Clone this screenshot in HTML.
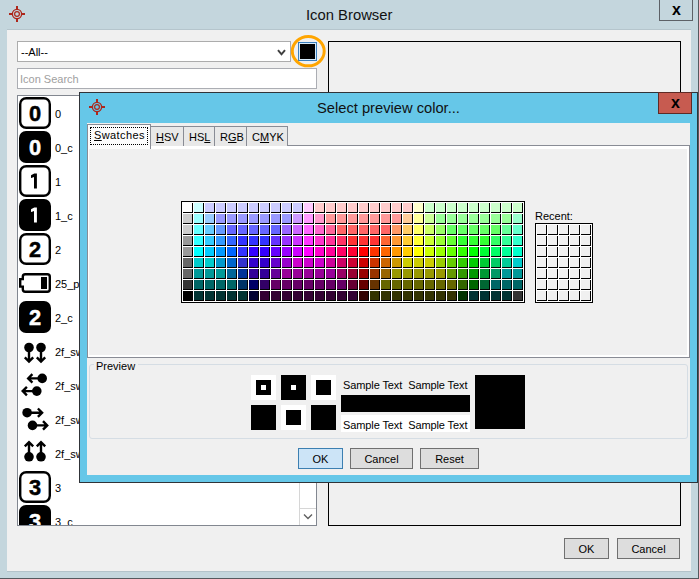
<!DOCTYPE html>
<html><head><meta charset="utf-8">
<style>
*{box-sizing:border-box;margin:0;padding:0}
html,body{width:699px;height:579px;overflow:hidden}
body{position:relative;background:#c4d6dd;font-family:"Liberation Sans",sans-serif;font-size:11px;color:#000}
.a{position:absolute}
.t{position:absolute;white-space:nowrap;line-height:1}
.btn{position:absolute;background:#dddddd;border:1px solid #707070;text-align:center;font-size:11px}
</style></head><body>
<!-- main window frame -->
<div class="a" style="left:698px;top:0;width:1px;height:579px;background:#55595e"></div>
<div class="a" style="left:0;top:578px;width:699px;height:1px;background:#55595e"></div>
<svg class="a" style="left:8px;top:5px" width="18" height="18" viewBox="0 0 18 18">
 <g fill="none" stroke="#ad271b">
  <circle cx="9" cy="9" r="4.6" stroke-width="1.3"/>
  <circle cx="9" cy="9" r="2.4" stroke-width="1.2"/>
 </g>
 <g fill="#ad271b"><rect x="8" y="1" width="2" height="3.5"/><rect x="8" y="13.5" width="2" height="3.5"/><rect x="1" y="8" width="3.5" height="2"/><rect x="13.5" y="8" width="3.5" height="2"/></g>
</svg>
<div class="t" style="left:306px;top:7px;font-size:15.5px;color:#111;transform:scaleX(0.955);transform-origin:0 0">Icon Browser</div>
<div class="a" style="left:659px;top:-1px;width:34px;height:22px;border:1px solid #5d6166"></div>
<div class="t" style="left:672px;top:2px;font-size:16px;font-weight:bold">x</div>

<!-- main content -->
<div class="a" style="left:7px;top:29px;width:684px;height:543px;background:#f0f0f0;border-top:1px solid #b5c5cc;border-bottom:1px solid #b3c3ca"></div>
<!-- combo -->
<div class="a" style="left:17px;top:41px;width:274px;height:21px;background:#fff;border:1px solid #acacac"></div>
<div class="t" style="left:21px;top:47px">--All--</div>
<svg class="a" style="left:277px;top:49px" width="9" height="8" viewBox="0 0 9 8"><path d="M1 1.2L4.5 5.3L8 1.2" fill="none" stroke="#404040" stroke-width="2"/></svg>
<!-- color button -->
<div class="a" style="left:298px;top:42px;width:19px;height:19px;border:1px solid #3a7ebd;background:#d5ebfb;padding:1px"><div style="width:15px;height:15px;background:#000"></div></div>
<svg class="a" style="left:288px;top:31px" width="40" height="40" viewBox="0 0 40 40"><ellipse cx="20.25" cy="20.2" rx="15.95" ry="14.6" fill="none" stroke="#ffa500" stroke-width="3"/></svg>
<!-- search -->
<div class="a" style="left:17px;top:68px;width:300px;height:21px;background:#fff;border:1px solid #abadb3"></div>
<div class="t" style="left:20px;top:74px;color:#a0a0a0">Icon Search</div>
<!-- list -->
<div class="a" style="left:17px;top:95px;width:300px;height:431px;background:#fff;border:1px solid #828790;overflow:hidden">
<div class="a" style="left:1px;top:1px;width:32px;height:32px"><svg width="32" height="32" viewBox="0 0 32 32"><rect x="1.2" y="1.2" width="29.6" height="29.6" rx="6" fill="#fff" stroke="#000" stroke-width="2.4"/><text x="16" y="23.7" text-anchor="middle" font-family="Liberation Sans" font-weight="bold" font-size="21.8" fill="#000" stroke="#000" stroke-width="0.5">0</text></svg></div>
<div class="t" style="left:37px;top:13px">0</div>
<div class="a" style="left:1px;top:35px;width:32px;height:32px"><svg width="32" height="32" viewBox="0 0 32 32"><rect x="0" y="0" width="32" height="32" rx="7" fill="#000"/><text x="16" y="23.7" text-anchor="middle" font-family="Liberation Sans" font-weight="bold" font-size="21.8" fill="#fff" stroke="#fff" stroke-width="0.5">0</text></svg></div>
<div class="t" style="left:37px;top:47px">0_c</div>
<div class="a" style="left:1px;top:69px;width:32px;height:32px"><svg width="32" height="32" viewBox="0 0 32 32"><rect x="1.2" y="1.2" width="29.6" height="29.6" rx="6" fill="#fff" stroke="#000" stroke-width="2.4"/><path d="M15.3 8.6H17.9V23.5H15.0V12.1L12.4 12.9Q12 13 12 12.6V10.6Q12 10.2 12.4 10L15.3 8.6Z" fill="#000"/></svg></div>
<div class="t" style="left:37px;top:81px">1</div>
<div class="a" style="left:1px;top:103px;width:32px;height:32px"><svg width="32" height="32" viewBox="0 0 32 32"><rect x="0" y="0" width="32" height="32" rx="7" fill="#000"/><path d="M15.3 8.6H17.9V23.5H15.0V12.1L12.4 12.9Q12 13 12 12.6V10.6Q12 10.2 12.4 10L15.3 8.6Z" fill="#fff"/></svg></div>
<div class="t" style="left:37px;top:115px">1_c</div>
<div class="a" style="left:1px;top:137px;width:32px;height:32px"><svg width="32" height="32" viewBox="0 0 32 32"><rect x="1.2" y="1.2" width="29.6" height="29.6" rx="6" fill="#fff" stroke="#000" stroke-width="2.4"/><text x="16" y="23.7" text-anchor="middle" font-family="Liberation Sans" font-weight="bold" font-size="21.8" fill="#000" stroke="#000" stroke-width="0.5">2</text></svg></div>
<div class="t" style="left:37px;top:149px">2</div>
<div class="a" style="left:1px;top:171px;width:32px;height:32px"><svg width="32" height="32" viewBox="0 0 32 32"><path d="M3.8 12.1V9.7Q3.8 7.2 6.3 7.2H28.3Q30.8 7.2 30.8 9.7V22.3Q30.8 24.8 28.3 24.8H6.3Q3.8 24.8 3.8 22.3V19.6H1.2V12.1Z" fill="none" stroke="#000" stroke-width="2.4"/><rect x="22" y="10" width="6" height="12" fill="#000"/></svg></div>
<div class="t" style="left:37px;top:183px">25_percent</div>
<div class="a" style="left:1px;top:205px;width:32px;height:32px"><svg width="32" height="32" viewBox="0 0 32 32"><rect x="0" y="0" width="32" height="32" rx="7" fill="#000"/><text x="16" y="23.7" text-anchor="middle" font-family="Liberation Sans" font-weight="bold" font-size="21.8" fill="#fff" stroke="#fff" stroke-width="0.5">2</text></svg></div>
<div class="t" style="left:37px;top:217px">2_c</div>
<div class="a" style="left:1px;top:239px;width:32px;height:32px"><svg width="32" height="32" viewBox="0 0 32 32"><circle cx="10" cy="12.5" r="4.8"/><circle cx="22" cy="12.5" r="4.8"/><path d="M10 13V26.5M5.8 22.4L10 26.6L14.2 22.4M22 13V26.5M17.8 22.4L22 26.6L26.2 22.4" fill="none" stroke="#000" stroke-width="2.4"/></svg></div>
<div class="t" style="left:37px;top:251px">2f_swap_vert</div>
<div class="a" style="left:1px;top:273px;width:32px;height:32px"><svg width="32" height="32" viewBox="0 0 32 32"><circle cx="23.2" cy="9.4" r="4.8"/><circle cx="17.8" cy="22.1" r="4.8"/><path d="M23 9.4H9.3M13.4 5.2L9.2 9.4L13.4 13.6M17.6 22.1H3.8M7.9 17.9L3.7 22.1L7.9 26.3" fill="none" stroke="#000" stroke-width="2.4"/></svg></div>
<div class="t" style="left:37px;top:285px">2f_swap_horiz</div>
<div class="a" style="left:1px;top:307px;width:32px;height:32px"><svg width="32" height="32" viewBox="0 0 32 32"><circle cx="8.1" cy="9.7" r="4.8"/><circle cx="13.5" cy="22.4" r="4.8"/><path d="M8.3 9.7H23M18.9 5.5L23.1 9.7L18.9 13.9M13.7 22.4H28.1M24 18.2L28.2 22.4L24 26.6" fill="none" stroke="#000" stroke-width="2.4"/></svg></div>
<div class="t" style="left:37px;top:319px">2f_swap_horiz</div>
<div class="a" style="left:1px;top:341px;width:32px;height:32px"><svg width="32" height="32" viewBox="0 0 32 32"><circle cx="10" cy="19.8" r="4.8"/><circle cx="22" cy="19.8" r="4.8"/><path d="M10 19.5V5.3M5.8 9.4L10 5.2L14.2 9.4M22 19.5V5.3M17.8 9.4L22 5.2L26.2 9.4" fill="none" stroke="#000" stroke-width="2.4"/></svg></div>
<div class="t" style="left:37px;top:353px">2f_swap_vert</div>
<div class="a" style="left:1px;top:375px;width:32px;height:32px"><svg width="32" height="32" viewBox="0 0 32 32"><rect x="1.2" y="1.2" width="29.6" height="29.6" rx="6" fill="#fff" stroke="#000" stroke-width="2.4"/><text x="16" y="23.7" text-anchor="middle" font-family="Liberation Sans" font-weight="bold" font-size="21.8" fill="#000" stroke="#000" stroke-width="0.5">3</text></svg></div>
<div class="t" style="left:37px;top:387px">3</div>
<div class="a" style="left:1px;top:409px;width:32px;height:32px"><svg width="32" height="32" viewBox="0 0 32 32"><rect x="0" y="0" width="32" height="32" rx="7" fill="#000"/><text x="16" y="23.7" text-anchor="middle" font-family="Liberation Sans" font-weight="bold" font-size="21.8" fill="#fff" stroke="#fff" stroke-width="0.5">3</text></svg></div>
<div class="t" style="left:37px;top:421px">3_c</div>
<div class="a" style="left:281px;top:0;width:17px;height:429px;background:#fff;border-left:1px solid #d6d6d6"></div>
<div class="a" style="left:281px;top:412px;width:17px;height:17px;border-left:1px solid #d6d6d6;border-top:1px solid #d6d6d6;background:#fff"></div>
<svg class="a" style="left:285px;top:417px" width="10" height="7" viewBox="0 0 10 7"><path d="M1 1.5L5 5.5L9 1.5" fill="none" stroke="#606060" stroke-width="1.4"/></svg>
</div>
<!-- right panel -->
<div class="a" style="left:328px;top:41px;width:353px;height:485px;border:1px solid #000"></div>
<div class="btn" style="left:564px;top:538px;width:45px;height:21px;line-height:20px">OK</div>
<div class="btn" style="left:617px;top:538px;width:63px;height:21px;line-height:20px">Cancel</div>

<!-- dialog -->
<div class="a" style="left:79px;top:92px;width:619px;height:391px;background:#66c7e8;border:1px solid #303338"></div>
<svg class="a" style="left:88px;top:98px" width="18" height="18" viewBox="0 0 18 18">
 <g fill="none" stroke="#ad271b">
  <circle cx="9" cy="9" r="4.6" stroke-width="1.3"/>
  <circle cx="9" cy="9" r="2.4" stroke-width="1.2"/>
 </g>
 <g fill="#ad271b"><rect x="8" y="1" width="2" height="3.5"/><rect x="8" y="13.5" width="2" height="3.5"/><rect x="1" y="8" width="3.5" height="2"/><rect x="13.5" y="8" width="3.5" height="2"/></g>
</svg>
<div class="t" style="left:317px;top:100px;font-size:15.5px;color:#111;transform:scaleX(0.948);transform-origin:0 0">Select preview color...</div>
<div class="a" style="left:658px;top:92px;width:34px;height:22px;background:#c75b50;border:1px solid #5e2a25"></div>
<div class="t" style="left:671px;top:95px;font-size:16px;font-weight:bold">x</div>
<div class="a" style="left:87px;top:123px;width:603px;height:352px;background:#f0f0f0"></div>

<!-- tab content -->
<div class="a" style="left:87px;top:145px;width:603px;height:213px;background:#f0f0f0;border:1px solid #898c95;box-shadow:inset 1px 0 0 #fff, inset 0 3px 0 #fff, inset -2px 0 0 #fff, inset 0 -2px 0 #fff"></div>
<!-- tabs -->
<div class="a" style="left:150px;top:126px;width:34px;height:20px;background:#e8e8e8;border:1px solid #898c95;border-bottom:none"></div>
<div class="a" style="left:183px;top:126px;width:32px;height:20px;background:#e8e8e8;border:1px solid #898c95;border-bottom:none"></div>
<div class="a" style="left:214px;top:126px;width:33px;height:20px;background:#e8e8e8;border:1px solid #898c95;border-bottom:none"></div>
<div class="a" style="left:246px;top:126px;width:42px;height:20px;background:#e8e8e8;border:1px solid #898c95;border-bottom:none"></div>
<div class="a" style="left:87px;top:124px;width:64px;height:25px;background:#fcfcfc;border:1px solid #898c95;border-bottom:none"></div>
<div class="a" style="left:90px;top:127px;width:58px;height:18px;border:1px dotted #000"></div>
<div class="t" style="left:94px;top:130px;font-size:11px;letter-spacing:0.4px"><u>S</u>watches</div>
<div class="t" style="left:156px;top:132px"><u>H</u>SV</div>
<div class="t" style="left:189px;top:132px">HS<u>L</u></div>
<div class="t" style="left:220px;top:132px">R<u>G</u>B</div>
<div class="t" style="left:252px;top:132px">C<u>M</u>YK</div>

<svg style="position:absolute;left:181px;top:201px" width="344" height="102" shape-rendering="crispEdges"><rect x="0" y="0" width="344" height="102" fill="#fff"/><rect x="0.5" y="0.5" width="343" height="101" fill="none" stroke="#000"/><rect x="2" y="2" width="10" height="10" fill="#ffffff"/><rect x="13" y="2" width="10" height="10" fill="#ccffff"/><rect x="24" y="2" width="10" height="10" fill="#ccccff"/><rect x="35" y="2" width="10" height="10" fill="#ccccff"/><rect x="46" y="2" width="10" height="10" fill="#ccccff"/><rect x="57" y="2" width="10" height="10" fill="#ccccff"/><rect x="68" y="2" width="10" height="10" fill="#ccccff"/><rect x="79" y="2" width="10" height="10" fill="#ccccff"/><rect x="90" y="2" width="10" height="10" fill="#ccccff"/><rect x="101" y="2" width="10" height="10" fill="#ccccff"/><rect x="112" y="2" width="10" height="10" fill="#ccccff"/><rect x="123" y="2" width="10" height="10" fill="#ffccff"/><rect x="134" y="2" width="10" height="10" fill="#ffcccc"/><rect x="145" y="2" width="10" height="10" fill="#ffcccc"/><rect x="156" y="2" width="10" height="10" fill="#ffcccc"/><rect x="167" y="2" width="10" height="10" fill="#ffcccc"/><rect x="178" y="2" width="10" height="10" fill="#ffcccc"/><rect x="189" y="2" width="10" height="10" fill="#ffcccc"/><rect x="200" y="2" width="10" height="10" fill="#ffcccc"/><rect x="211" y="2" width="10" height="10" fill="#ffcccc"/><rect x="222" y="2" width="10" height="10" fill="#ffcccc"/><rect x="233" y="2" width="10" height="10" fill="#ffffcc"/><rect x="244" y="2" width="10" height="10" fill="#ccffcc"/><rect x="255" y="2" width="10" height="10" fill="#ccffcc"/><rect x="266" y="2" width="10" height="10" fill="#ccffcc"/><rect x="277" y="2" width="10" height="10" fill="#ccffcc"/><rect x="288" y="2" width="10" height="10" fill="#ccffcc"/><rect x="299" y="2" width="10" height="10" fill="#ccffcc"/><rect x="310" y="2" width="10" height="10" fill="#ccffcc"/><rect x="321" y="2" width="10" height="10" fill="#ccffcc"/><rect x="332" y="2" width="10" height="10" fill="#ccffcc"/><rect x="2" y="13" width="10" height="10" fill="#cccccc"/><rect x="13" y="13" width="10" height="10" fill="#99ffff"/><rect x="24" y="13" width="10" height="10" fill="#99ccff"/><rect x="35" y="13" width="10" height="10" fill="#9999ff"/><rect x="46" y="13" width="10" height="10" fill="#9999ff"/><rect x="57" y="13" width="10" height="10" fill="#9999ff"/><rect x="68" y="13" width="10" height="10" fill="#9999ff"/><rect x="79" y="13" width="10" height="10" fill="#9999ff"/><rect x="90" y="13" width="10" height="10" fill="#9999ff"/><rect x="101" y="13" width="10" height="10" fill="#9999ff"/><rect x="112" y="13" width="10" height="10" fill="#cc99ff"/><rect x="123" y="13" width="10" height="10" fill="#ff99ff"/><rect x="134" y="13" width="10" height="10" fill="#ff99cc"/><rect x="145" y="13" width="10" height="10" fill="#ff9999"/><rect x="156" y="13" width="10" height="10" fill="#ff9999"/><rect x="167" y="13" width="10" height="10" fill="#ff9999"/><rect x="178" y="13" width="10" height="10" fill="#ff9999"/><rect x="189" y="13" width="10" height="10" fill="#ff9999"/><rect x="200" y="13" width="10" height="10" fill="#ff9999"/><rect x="211" y="13" width="10" height="10" fill="#ff9999"/><rect x="222" y="13" width="10" height="10" fill="#ffcc99"/><rect x="233" y="13" width="10" height="10" fill="#ffff99"/><rect x="244" y="13" width="10" height="10" fill="#ccff99"/><rect x="255" y="13" width="10" height="10" fill="#99ff99"/><rect x="266" y="13" width="10" height="10" fill="#99ff99"/><rect x="277" y="13" width="10" height="10" fill="#99ff99"/><rect x="288" y="13" width="10" height="10" fill="#99ff99"/><rect x="299" y="13" width="10" height="10" fill="#99ff99"/><rect x="310" y="13" width="10" height="10" fill="#99ff99"/><rect x="321" y="13" width="10" height="10" fill="#99ff99"/><rect x="332" y="13" width="10" height="10" fill="#99ffcc"/><rect x="2" y="24" width="10" height="10" fill="#cccccc"/><rect x="13" y="24" width="10" height="10" fill="#66ffff"/><rect x="24" y="24" width="10" height="10" fill="#66ccff"/><rect x="35" y="24" width="10" height="10" fill="#6699ff"/><rect x="46" y="24" width="10" height="10" fill="#6666ff"/><rect x="57" y="24" width="10" height="10" fill="#6666ff"/><rect x="68" y="24" width="10" height="10" fill="#6666ff"/><rect x="79" y="24" width="10" height="10" fill="#6666ff"/><rect x="90" y="24" width="10" height="10" fill="#6666ff"/><rect x="101" y="24" width="10" height="10" fill="#9966ff"/><rect x="112" y="24" width="10" height="10" fill="#cc66ff"/><rect x="123" y="24" width="10" height="10" fill="#ff66ff"/><rect x="134" y="24" width="10" height="10" fill="#ff66cc"/><rect x="145" y="24" width="10" height="10" fill="#ff6699"/><rect x="156" y="24" width="10" height="10" fill="#ff6666"/><rect x="167" y="24" width="10" height="10" fill="#ff6666"/><rect x="178" y="24" width="10" height="10" fill="#ff6666"/><rect x="189" y="24" width="10" height="10" fill="#ff6666"/><rect x="200" y="24" width="10" height="10" fill="#ff6666"/><rect x="211" y="24" width="10" height="10" fill="#ff9966"/><rect x="222" y="24" width="10" height="10" fill="#ffcc66"/><rect x="233" y="24" width="10" height="10" fill="#ffff66"/><rect x="244" y="24" width="10" height="10" fill="#ccff66"/><rect x="255" y="24" width="10" height="10" fill="#99ff66"/><rect x="266" y="24" width="10" height="10" fill="#66ff66"/><rect x="277" y="24" width="10" height="10" fill="#66ff66"/><rect x="288" y="24" width="10" height="10" fill="#66ff66"/><rect x="299" y="24" width="10" height="10" fill="#66ff66"/><rect x="310" y="24" width="10" height="10" fill="#66ff66"/><rect x="321" y="24" width="10" height="10" fill="#66ff99"/><rect x="332" y="24" width="10" height="10" fill="#66ffcc"/><rect x="2" y="35" width="10" height="10" fill="#999999"/><rect x="13" y="35" width="10" height="10" fill="#33ffff"/><rect x="24" y="35" width="10" height="10" fill="#33ccff"/><rect x="35" y="35" width="10" height="10" fill="#3399ff"/><rect x="46" y="35" width="10" height="10" fill="#3366ff"/><rect x="57" y="35" width="10" height="10" fill="#3333ff"/><rect x="68" y="35" width="10" height="10" fill="#3333ff"/><rect x="79" y="35" width="10" height="10" fill="#3333ff"/><rect x="90" y="35" width="10" height="10" fill="#6633ff"/><rect x="101" y="35" width="10" height="10" fill="#9933ff"/><rect x="112" y="35" width="10" height="10" fill="#cc33ff"/><rect x="123" y="35" width="10" height="10" fill="#ff33ff"/><rect x="134" y="35" width="10" height="10" fill="#ff33cc"/><rect x="145" y="35" width="10" height="10" fill="#ff3399"/><rect x="156" y="35" width="10" height="10" fill="#ff3366"/><rect x="167" y="35" width="10" height="10" fill="#ff3333"/><rect x="178" y="35" width="10" height="10" fill="#ff3333"/><rect x="189" y="35" width="10" height="10" fill="#ff3333"/><rect x="200" y="35" width="10" height="10" fill="#ff6633"/><rect x="211" y="35" width="10" height="10" fill="#ff9933"/><rect x="222" y="35" width="10" height="10" fill="#ffcc33"/><rect x="233" y="35" width="10" height="10" fill="#ffff33"/><rect x="244" y="35" width="10" height="10" fill="#ccff33"/><rect x="255" y="35" width="10" height="10" fill="#99ff33"/><rect x="266" y="35" width="10" height="10" fill="#66ff33"/><rect x="277" y="35" width="10" height="10" fill="#33ff33"/><rect x="288" y="35" width="10" height="10" fill="#33ff33"/><rect x="299" y="35" width="10" height="10" fill="#33ff33"/><rect x="310" y="35" width="10" height="10" fill="#33ff66"/><rect x="321" y="35" width="10" height="10" fill="#33ff99"/><rect x="332" y="35" width="10" height="10" fill="#33ffcc"/><rect x="2" y="46" width="10" height="10" fill="#999999"/><rect x="13" y="46" width="10" height="10" fill="#00ffff"/><rect x="24" y="46" width="10" height="10" fill="#00ccff"/><rect x="35" y="46" width="10" height="10" fill="#0099ff"/><rect x="46" y="46" width="10" height="10" fill="#0066ff"/><rect x="57" y="46" width="10" height="10" fill="#3333ff"/><rect x="68" y="46" width="10" height="10" fill="#3300ff"/><rect x="79" y="46" width="10" height="10" fill="#3300ff"/><rect x="90" y="46" width="10" height="10" fill="#6600ff"/><rect x="101" y="46" width="10" height="10" fill="#9900ff"/><rect x="112" y="46" width="10" height="10" fill="#cc00ff"/><rect x="123" y="46" width="10" height="10" fill="#ff00ff"/><rect x="134" y="46" width="10" height="10" fill="#ff00cc"/><rect x="145" y="46" width="10" height="10" fill="#ff0099"/><rect x="156" y="46" width="10" height="10" fill="#ff0066"/><rect x="167" y="46" width="10" height="10" fill="#ff0033"/><rect x="178" y="46" width="10" height="10" fill="#ff0000"/><rect x="189" y="46" width="10" height="10" fill="#ff3300"/><rect x="200" y="46" width="10" height="10" fill="#ff6600"/><rect x="211" y="46" width="10" height="10" fill="#ff9900"/><rect x="222" y="46" width="10" height="10" fill="#ffcc00"/><rect x="233" y="46" width="10" height="10" fill="#ffff00"/><rect x="244" y="46" width="10" height="10" fill="#ccff00"/><rect x="255" y="46" width="10" height="10" fill="#99ff00"/><rect x="266" y="46" width="10" height="10" fill="#66ff00"/><rect x="277" y="46" width="10" height="10" fill="#33ff00"/><rect x="288" y="46" width="10" height="10" fill="#00ff00"/><rect x="299" y="46" width="10" height="10" fill="#00ff33"/><rect x="310" y="46" width="10" height="10" fill="#00ff66"/><rect x="321" y="46" width="10" height="10" fill="#00ff99"/><rect x="332" y="46" width="10" height="10" fill="#00ffcc"/><rect x="2" y="57" width="10" height="10" fill="#666666"/><rect x="13" y="57" width="10" height="10" fill="#00cccc"/><rect x="24" y="57" width="10" height="10" fill="#00cccc"/><rect x="35" y="57" width="10" height="10" fill="#0099cc"/><rect x="46" y="57" width="10" height="10" fill="#0066cc"/><rect x="57" y="57" width="10" height="10" fill="#3333cc"/><rect x="68" y="57" width="10" height="10" fill="#3300cc"/><rect x="79" y="57" width="10" height="10" fill="#3300cc"/><rect x="90" y="57" width="10" height="10" fill="#6600cc"/><rect x="101" y="57" width="10" height="10" fill="#9900cc"/><rect x="112" y="57" width="10" height="10" fill="#cc00cc"/><rect x="123" y="57" width="10" height="10" fill="#cc00cc"/><rect x="134" y="57" width="10" height="10" fill="#cc00cc"/><rect x="145" y="57" width="10" height="10" fill="#cc0099"/><rect x="156" y="57" width="10" height="10" fill="#cc0066"/><rect x="167" y="57" width="10" height="10" fill="#cc0033"/><rect x="178" y="57" width="10" height="10" fill="#cc0000"/><rect x="189" y="57" width="10" height="10" fill="#cc3300"/><rect x="200" y="57" width="10" height="10" fill="#cc6600"/><rect x="211" y="57" width="10" height="10" fill="#cc9900"/><rect x="222" y="57" width="10" height="10" fill="#cccc00"/><rect x="233" y="57" width="10" height="10" fill="#cccc00"/><rect x="244" y="57" width="10" height="10" fill="#cccc00"/><rect x="255" y="57" width="10" height="10" fill="#99cc00"/><rect x="266" y="57" width="10" height="10" fill="#66cc00"/><rect x="277" y="57" width="10" height="10" fill="#33cc00"/><rect x="288" y="57" width="10" height="10" fill="#00cc00"/><rect x="299" y="57" width="10" height="10" fill="#00cc33"/><rect x="310" y="57" width="10" height="10" fill="#00cc66"/><rect x="321" y="57" width="10" height="10" fill="#00cc99"/><rect x="332" y="57" width="10" height="10" fill="#00cccc"/><rect x="2" y="68" width="10" height="10" fill="#666666"/><rect x="13" y="68" width="10" height="10" fill="#009999"/><rect x="24" y="68" width="10" height="10" fill="#009999"/><rect x="35" y="68" width="10" height="10" fill="#009999"/><rect x="46" y="68" width="10" height="10" fill="#006699"/><rect x="57" y="68" width="10" height="10" fill="#003399"/><rect x="68" y="68" width="10" height="10" fill="#330099"/><rect x="79" y="68" width="10" height="10" fill="#330099"/><rect x="90" y="68" width="10" height="10" fill="#660099"/><rect x="101" y="68" width="10" height="10" fill="#990099"/><rect x="112" y="68" width="10" height="10" fill="#990099"/><rect x="123" y="68" width="10" height="10" fill="#990099"/><rect x="134" y="68" width="10" height="10" fill="#990099"/><rect x="145" y="68" width="10" height="10" fill="#990099"/><rect x="156" y="68" width="10" height="10" fill="#990066"/><rect x="167" y="68" width="10" height="10" fill="#990033"/><rect x="178" y="68" width="10" height="10" fill="#990000"/><rect x="189" y="68" width="10" height="10" fill="#993300"/><rect x="200" y="68" width="10" height="10" fill="#996600"/><rect x="211" y="68" width="10" height="10" fill="#999900"/><rect x="222" y="68" width="10" height="10" fill="#999900"/><rect x="233" y="68" width="10" height="10" fill="#999900"/><rect x="244" y="68" width="10" height="10" fill="#999900"/><rect x="255" y="68" width="10" height="10" fill="#999900"/><rect x="266" y="68" width="10" height="10" fill="#669900"/><rect x="277" y="68" width="10" height="10" fill="#339900"/><rect x="288" y="68" width="10" height="10" fill="#009900"/><rect x="299" y="68" width="10" height="10" fill="#009933"/><rect x="310" y="68" width="10" height="10" fill="#009966"/><rect x="321" y="68" width="10" height="10" fill="#009999"/><rect x="332" y="68" width="10" height="10" fill="#009999"/><rect x="2" y="79" width="10" height="10" fill="#333333"/><rect x="13" y="79" width="10" height="10" fill="#006666"/><rect x="24" y="79" width="10" height="10" fill="#006666"/><rect x="35" y="79" width="10" height="10" fill="#006666"/><rect x="46" y="79" width="10" height="10" fill="#006666"/><rect x="57" y="79" width="10" height="10" fill="#003366"/><rect x="68" y="79" width="10" height="10" fill="#000066"/><rect x="79" y="79" width="10" height="10" fill="#330066"/><rect x="90" y="79" width="10" height="10" fill="#660066"/><rect x="101" y="79" width="10" height="10" fill="#660066"/><rect x="112" y="79" width="10" height="10" fill="#660066"/><rect x="123" y="79" width="10" height="10" fill="#660066"/><rect x="134" y="79" width="10" height="10" fill="#660066"/><rect x="145" y="79" width="10" height="10" fill="#660066"/><rect x="156" y="79" width="10" height="10" fill="#660066"/><rect x="167" y="79" width="10" height="10" fill="#660033"/><rect x="178" y="79" width="10" height="10" fill="#660000"/><rect x="189" y="79" width="10" height="10" fill="#663300"/><rect x="200" y="79" width="10" height="10" fill="#666600"/><rect x="211" y="79" width="10" height="10" fill="#666600"/><rect x="222" y="79" width="10" height="10" fill="#666600"/><rect x="233" y="79" width="10" height="10" fill="#666600"/><rect x="244" y="79" width="10" height="10" fill="#666600"/><rect x="255" y="79" width="10" height="10" fill="#666600"/><rect x="266" y="79" width="10" height="10" fill="#666600"/><rect x="277" y="79" width="10" height="10" fill="#336600"/><rect x="288" y="79" width="10" height="10" fill="#006600"/><rect x="299" y="79" width="10" height="10" fill="#006633"/><rect x="310" y="79" width="10" height="10" fill="#006666"/><rect x="321" y="79" width="10" height="10" fill="#006666"/><rect x="332" y="79" width="10" height="10" fill="#006666"/><rect x="2" y="90" width="10" height="10" fill="#000000"/><rect x="13" y="90" width="10" height="10" fill="#003333"/><rect x="24" y="90" width="10" height="10" fill="#003333"/><rect x="35" y="90" width="10" height="10" fill="#003333"/><rect x="46" y="90" width="10" height="10" fill="#003333"/><rect x="57" y="90" width="10" height="10" fill="#003333"/><rect x="68" y="90" width="10" height="10" fill="#000033"/><rect x="79" y="90" width="10" height="10" fill="#330033"/><rect x="90" y="90" width="10" height="10" fill="#330033"/><rect x="101" y="90" width="10" height="10" fill="#330033"/><rect x="112" y="90" width="10" height="10" fill="#330033"/><rect x="123" y="90" width="10" height="10" fill="#330033"/><rect x="134" y="90" width="10" height="10" fill="#330033"/><rect x="145" y="90" width="10" height="10" fill="#330033"/><rect x="156" y="90" width="10" height="10" fill="#330033"/><rect x="167" y="90" width="10" height="10" fill="#330033"/><rect x="178" y="90" width="10" height="10" fill="#330000"/><rect x="189" y="90" width="10" height="10" fill="#333300"/><rect x="200" y="90" width="10" height="10" fill="#333300"/><rect x="211" y="90" width="10" height="10" fill="#333300"/><rect x="222" y="90" width="10" height="10" fill="#333300"/><rect x="233" y="90" width="10" height="10" fill="#333300"/><rect x="244" y="90" width="10" height="10" fill="#333300"/><rect x="255" y="90" width="10" height="10" fill="#333300"/><rect x="266" y="90" width="10" height="10" fill="#333300"/><rect x="277" y="90" width="10" height="10" fill="#003300"/><rect x="288" y="90" width="10" height="10" fill="#003333"/><rect x="299" y="90" width="10" height="10" fill="#003333"/><rect x="310" y="90" width="10" height="10" fill="#003333"/><rect x="321" y="90" width="10" height="10" fill="#003333"/><rect x="332" y="90" width="10" height="10" fill="#333333"/><path d="M11.5 2V12M2 11.5H12M22.5 2V12M13 11.5H23M33.5 2V12M24 11.5H34M44.5 2V12M35 11.5H45M55.5 2V12M46 11.5H56M66.5 2V12M57 11.5H67M77.5 2V12M68 11.5H78M88.5 2V12M79 11.5H89M99.5 2V12M90 11.5H100M110.5 2V12M101 11.5H111M121.5 2V12M112 11.5H122M132.5 2V12M123 11.5H133M143.5 2V12M134 11.5H144M154.5 2V12M145 11.5H155M165.5 2V12M156 11.5H166M176.5 2V12M167 11.5H177M187.5 2V12M178 11.5H188M198.5 2V12M189 11.5H199M209.5 2V12M200 11.5H210M220.5 2V12M211 11.5H221M231.5 2V12M222 11.5H232M242.5 2V12M233 11.5H243M253.5 2V12M244 11.5H254M264.5 2V12M255 11.5H265M275.5 2V12M266 11.5H276M286.5 2V12M277 11.5H287M297.5 2V12M288 11.5H298M308.5 2V12M299 11.5H309M319.5 2V12M310 11.5H320M330.5 2V12M321 11.5H331M341.5 2V12M332 11.5H342M11.5 13V23M2 22.5H12M22.5 13V23M13 22.5H23M33.5 13V23M24 22.5H34M44.5 13V23M35 22.5H45M55.5 13V23M46 22.5H56M66.5 13V23M57 22.5H67M77.5 13V23M68 22.5H78M88.5 13V23M79 22.5H89M99.5 13V23M90 22.5H100M110.5 13V23M101 22.5H111M121.5 13V23M112 22.5H122M132.5 13V23M123 22.5H133M143.5 13V23M134 22.5H144M154.5 13V23M145 22.5H155M165.5 13V23M156 22.5H166M176.5 13V23M167 22.5H177M187.5 13V23M178 22.5H188M198.5 13V23M189 22.5H199M209.5 13V23M200 22.5H210M220.5 13V23M211 22.5H221M231.5 13V23M222 22.5H232M242.5 13V23M233 22.5H243M253.5 13V23M244 22.5H254M264.5 13V23M255 22.5H265M275.5 13V23M266 22.5H276M286.5 13V23M277 22.5H287M297.5 13V23M288 22.5H298M308.5 13V23M299 22.5H309M319.5 13V23M310 22.5H320M330.5 13V23M321 22.5H331M341.5 13V23M332 22.5H342M11.5 24V34M2 33.5H12M22.5 24V34M13 33.5H23M33.5 24V34M24 33.5H34M44.5 24V34M35 33.5H45M55.5 24V34M46 33.5H56M66.5 24V34M57 33.5H67M77.5 24V34M68 33.5H78M88.5 24V34M79 33.5H89M99.5 24V34M90 33.5H100M110.5 24V34M101 33.5H111M121.5 24V34M112 33.5H122M132.5 24V34M123 33.5H133M143.5 24V34M134 33.5H144M154.5 24V34M145 33.5H155M165.5 24V34M156 33.5H166M176.5 24V34M167 33.5H177M187.5 24V34M178 33.5H188M198.5 24V34M189 33.5H199M209.5 24V34M200 33.5H210M220.5 24V34M211 33.5H221M231.5 24V34M222 33.5H232M242.5 24V34M233 33.5H243M253.5 24V34M244 33.5H254M264.5 24V34M255 33.5H265M275.5 24V34M266 33.5H276M286.5 24V34M277 33.5H287M297.5 24V34M288 33.5H298M308.5 24V34M299 33.5H309M319.5 24V34M310 33.5H320M330.5 24V34M321 33.5H331M341.5 24V34M332 33.5H342M11.5 35V45M2 44.5H12M22.5 35V45M13 44.5H23M33.5 35V45M24 44.5H34M44.5 35V45M35 44.5H45M55.5 35V45M46 44.5H56M66.5 35V45M57 44.5H67M77.5 35V45M68 44.5H78M88.5 35V45M79 44.5H89M99.5 35V45M90 44.5H100M110.5 35V45M101 44.5H111M121.5 35V45M112 44.5H122M132.5 35V45M123 44.5H133M143.5 35V45M134 44.5H144M154.5 35V45M145 44.5H155M165.5 35V45M156 44.5H166M176.5 35V45M167 44.5H177M187.5 35V45M178 44.5H188M198.5 35V45M189 44.5H199M209.5 35V45M200 44.5H210M220.5 35V45M211 44.5H221M231.5 35V45M222 44.5H232M242.5 35V45M233 44.5H243M253.5 35V45M244 44.5H254M264.5 35V45M255 44.5H265M275.5 35V45M266 44.5H276M286.5 35V45M277 44.5H287M297.5 35V45M288 44.5H298M308.5 35V45M299 44.5H309M319.5 35V45M310 44.5H320M330.5 35V45M321 44.5H331M341.5 35V45M332 44.5H342M11.5 46V56M2 55.5H12M22.5 46V56M13 55.5H23M33.5 46V56M24 55.5H34M44.5 46V56M35 55.5H45M55.5 46V56M46 55.5H56M66.5 46V56M57 55.5H67M77.5 46V56M68 55.5H78M88.5 46V56M79 55.5H89M99.5 46V56M90 55.5H100M110.5 46V56M101 55.5H111M121.5 46V56M112 55.5H122M132.5 46V56M123 55.5H133M143.5 46V56M134 55.5H144M154.5 46V56M145 55.5H155M165.5 46V56M156 55.5H166M176.5 46V56M167 55.5H177M187.5 46V56M178 55.5H188M198.5 46V56M189 55.5H199M209.5 46V56M200 55.5H210M220.5 46V56M211 55.5H221M231.5 46V56M222 55.5H232M242.5 46V56M233 55.5H243M253.5 46V56M244 55.5H254M264.5 46V56M255 55.5H265M275.5 46V56M266 55.5H276M286.5 46V56M277 55.5H287M297.5 46V56M288 55.5H298M308.5 46V56M299 55.5H309M319.5 46V56M310 55.5H320M330.5 46V56M321 55.5H331M341.5 46V56M332 55.5H342M11.5 57V67M2 66.5H12M22.5 57V67M13 66.5H23M33.5 57V67M24 66.5H34M44.5 57V67M35 66.5H45M55.5 57V67M46 66.5H56M66.5 57V67M57 66.5H67M77.5 57V67M68 66.5H78M88.5 57V67M79 66.5H89M99.5 57V67M90 66.5H100M110.5 57V67M101 66.5H111M121.5 57V67M112 66.5H122M132.5 57V67M123 66.5H133M143.5 57V67M134 66.5H144M154.5 57V67M145 66.5H155M165.5 57V67M156 66.5H166M176.5 57V67M167 66.5H177M187.5 57V67M178 66.5H188M198.5 57V67M189 66.5H199M209.5 57V67M200 66.5H210M220.5 57V67M211 66.5H221M231.5 57V67M222 66.5H232M242.5 57V67M233 66.5H243M253.5 57V67M244 66.5H254M264.5 57V67M255 66.5H265M275.5 57V67M266 66.5H276M286.5 57V67M277 66.5H287M297.5 57V67M288 66.5H298M308.5 57V67M299 66.5H309M319.5 57V67M310 66.5H320M330.5 57V67M321 66.5H331M341.5 57V67M332 66.5H342M11.5 68V78M2 77.5H12M22.5 68V78M13 77.5H23M33.5 68V78M24 77.5H34M44.5 68V78M35 77.5H45M55.5 68V78M46 77.5H56M66.5 68V78M57 77.5H67M77.5 68V78M68 77.5H78M88.5 68V78M79 77.5H89M99.5 68V78M90 77.5H100M110.5 68V78M101 77.5H111M121.5 68V78M112 77.5H122M132.5 68V78M123 77.5H133M143.5 68V78M134 77.5H144M154.5 68V78M145 77.5H155M165.5 68V78M156 77.5H166M176.5 68V78M167 77.5H177M187.5 68V78M178 77.5H188M198.5 68V78M189 77.5H199M209.5 68V78M200 77.5H210M220.5 68V78M211 77.5H221M231.5 68V78M222 77.5H232M242.5 68V78M233 77.5H243M253.5 68V78M244 77.5H254M264.5 68V78M255 77.5H265M275.5 68V78M266 77.5H276M286.5 68V78M277 77.5H287M297.5 68V78M288 77.5H298M308.5 68V78M299 77.5H309M319.5 68V78M310 77.5H320M330.5 68V78M321 77.5H331M341.5 68V78M332 77.5H342M11.5 79V89M2 88.5H12M22.5 79V89M13 88.5H23M33.5 79V89M24 88.5H34M44.5 79V89M35 88.5H45M55.5 79V89M46 88.5H56M66.5 79V89M57 88.5H67M77.5 79V89M68 88.5H78M88.5 79V89M79 88.5H89M99.5 79V89M90 88.5H100M110.5 79V89M101 88.5H111M121.5 79V89M112 88.5H122M132.5 79V89M123 88.5H133M143.5 79V89M134 88.5H144M154.5 79V89M145 88.5H155M165.5 79V89M156 88.5H166M176.5 79V89M167 88.5H177M187.5 79V89M178 88.5H188M198.5 79V89M189 88.5H199M209.5 79V89M200 88.5H210M220.5 79V89M211 88.5H221M231.5 79V89M222 88.5H232M242.5 79V89M233 88.5H243M253.5 79V89M244 88.5H254M264.5 79V89M255 88.5H265M275.5 79V89M266 88.5H276M286.5 79V89M277 88.5H287M297.5 79V89M288 88.5H298M308.5 79V89M299 88.5H309M319.5 79V89M310 88.5H320M330.5 79V89M321 88.5H331M341.5 79V89M332 88.5H342M11.5 90V100M2 99.5H12M22.5 90V100M13 99.5H23M33.5 90V100M24 99.5H34M44.5 90V100M35 99.5H45M55.5 90V100M46 99.5H56M66.5 90V100M57 99.5H67M77.5 90V100M68 99.5H78M88.5 90V100M79 99.5H89M99.5 90V100M90 99.5H100M110.5 90V100M101 99.5H111M121.5 90V100M112 99.5H122M132.5 90V100M123 99.5H133M143.5 90V100M134 99.5H144M154.5 90V100M145 99.5H155M165.5 90V100M156 99.5H166M176.5 90V100M167 99.5H177M187.5 90V100M178 99.5H188M198.5 90V100M189 99.5H199M209.5 90V100M200 99.5H210M220.5 90V100M211 99.5H221M231.5 90V100M222 99.5H232M242.5 90V100M233 99.5H243M253.5 90V100M244 99.5H254M264.5 90V100M255 99.5H265M275.5 90V100M266 99.5H276M286.5 90V100M277 99.5H287M297.5 90V100M288 99.5H298M308.5 90V100M299 99.5H309M319.5 90V100M310 99.5H320M330.5 90V100M321 99.5H331M341.5 90V100M332 99.5H342" stroke="#000" fill="none"/></svg>
<div class="t" style="left:535px;top:211px">Recent:</div>
<svg style="position:absolute;left:535px;top:223px" width="58" height="80" shape-rendering="crispEdges"><rect x="0" y="0" width="58" height="80" fill="#fff"/><rect x="0.5" y="0.5" width="57" height="79" fill="none" stroke="#000"/><rect x="2" y="2" width="10" height="10" fill="#f0f0f0"/><rect x="13" y="2" width="10" height="10" fill="#f0f0f0"/><rect x="24" y="2" width="10" height="10" fill="#f0f0f0"/><rect x="35" y="2" width="10" height="10" fill="#f0f0f0"/><rect x="46" y="2" width="10" height="10" fill="#f0f0f0"/><rect x="2" y="13" width="10" height="10" fill="#f0f0f0"/><rect x="13" y="13" width="10" height="10" fill="#f0f0f0"/><rect x="24" y="13" width="10" height="10" fill="#f0f0f0"/><rect x="35" y="13" width="10" height="10" fill="#f0f0f0"/><rect x="46" y="13" width="10" height="10" fill="#f0f0f0"/><rect x="2" y="24" width="10" height="10" fill="#f0f0f0"/><rect x="13" y="24" width="10" height="10" fill="#f0f0f0"/><rect x="24" y="24" width="10" height="10" fill="#f0f0f0"/><rect x="35" y="24" width="10" height="10" fill="#f0f0f0"/><rect x="46" y="24" width="10" height="10" fill="#f0f0f0"/><rect x="2" y="35" width="10" height="10" fill="#f0f0f0"/><rect x="13" y="35" width="10" height="10" fill="#f0f0f0"/><rect x="24" y="35" width="10" height="10" fill="#f0f0f0"/><rect x="35" y="35" width="10" height="10" fill="#f0f0f0"/><rect x="46" y="35" width="10" height="10" fill="#f0f0f0"/><rect x="2" y="46" width="10" height="10" fill="#f0f0f0"/><rect x="13" y="46" width="10" height="10" fill="#f0f0f0"/><rect x="24" y="46" width="10" height="10" fill="#f0f0f0"/><rect x="35" y="46" width="10" height="10" fill="#f0f0f0"/><rect x="46" y="46" width="10" height="10" fill="#f0f0f0"/><rect x="2" y="57" width="10" height="10" fill="#f0f0f0"/><rect x="13" y="57" width="10" height="10" fill="#f0f0f0"/><rect x="24" y="57" width="10" height="10" fill="#f0f0f0"/><rect x="35" y="57" width="10" height="10" fill="#f0f0f0"/><rect x="46" y="57" width="10" height="10" fill="#f0f0f0"/><rect x="2" y="68" width="10" height="10" fill="#f0f0f0"/><rect x="13" y="68" width="10" height="10" fill="#f0f0f0"/><rect x="24" y="68" width="10" height="10" fill="#f0f0f0"/><rect x="35" y="68" width="10" height="10" fill="#f0f0f0"/><rect x="46" y="68" width="10" height="10" fill="#f0f0f0"/><path d="M11.5 2V12M2 11.5H12M22.5 2V12M13 11.5H23M33.5 2V12M24 11.5H34M44.5 2V12M35 11.5H45M55.5 2V12M46 11.5H56M11.5 13V23M2 22.5H12M22.5 13V23M13 22.5H23M33.5 13V23M24 22.5H34M44.5 13V23M35 22.5H45M55.5 13V23M46 22.5H56M11.5 24V34M2 33.5H12M22.5 24V34M13 33.5H23M33.5 24V34M24 33.5H34M44.5 24V34M35 33.5H45M55.5 24V34M46 33.5H56M11.5 35V45M2 44.5H12M22.5 35V45M13 44.5H23M33.5 35V45M24 44.5H34M44.5 35V45M35 44.5H45M55.5 35V45M46 44.5H56M11.5 46V56M2 55.5H12M22.5 46V56M13 55.5H23M33.5 46V56M24 55.5H34M44.5 46V56M35 55.5H45M55.5 46V56M46 55.5H56M11.5 57V67M2 66.5H12M22.5 57V67M13 66.5H23M33.5 57V67M24 66.5H34M44.5 57V67M35 66.5H45M55.5 57V67M46 66.5H56M11.5 68V78M2 77.5H12M22.5 68V78M13 77.5H23M33.5 68V78M24 77.5H34M44.5 68V78M35 77.5H45M55.5 68V78M46 77.5H56" stroke="#000" fill="none"/></svg>

<!-- preview -->
<div class="a" style="left:89px;top:364px;width:599px;height:75px;border:1px solid #d5dde4;border-radius:3px"></div>
<div class="a" style="left:94px;top:362px;width:44px;height:6px;background:#f0f0f0"></div>
<div class="t" style="left:96px;top:361px">Preview</div>
<svg class="a" style="left:251px;top:375px" width="85" height="55" shape-rendering="crispEdges">
 <rect x="0" y="0" width="25" height="25" fill="#fff"/><rect x="5" y="5" width="15" height="15" fill="#000"/><rect x="10" y="10" width="5" height="5" fill="#fff"/>
 <rect x="30" y="0" width="25" height="25" fill="#000"/><rect x="40" y="10" width="5" height="5" fill="#fff"/>
 <rect x="60" y="0" width="25" height="25" fill="#fff"/><rect x="65" y="5" width="15" height="15" fill="#000"/>
 <rect x="0" y="30" width="25" height="25" fill="#000"/>
 <rect x="30" y="30" width="25" height="25" fill="#fff"/><rect x="35" y="35" width="15" height="15" fill="#000"/>
 <rect x="60" y="30" width="25" height="25" fill="#000"/>
</svg>
<div class="t" style="left:343px;top:380px;letter-spacing:-0.1px">Sample Text&nbsp; Sample Text</div>
<div class="a" style="left:341px;top:395px;width:129px;height:17px;background:#000"></div>
<div class="a" style="left:341px;top:415px;width:129px;height:17px;background:#fff"></div>
<div class="t" style="left:343px;top:420px;letter-spacing:-0.1px">Sample Text&nbsp; Sample Text</div>
<div class="a" style="left:475px;top:375px;width:50px;height:54px;background:#000"></div>

<!-- dialog buttons -->
<div class="btn" style="left:298px;top:448px;width:45px;height:21px;line-height:20px;background:#cce4f7;border-color:#3c7fb1">OK</div>
<div class="btn" style="left:350px;top:448px;width:63px;height:21px;line-height:20px">Cancel</div>
<div class="btn" style="left:420px;top:448px;width:59px;height:21px;line-height:20px">Reset</div>
</body></html>
